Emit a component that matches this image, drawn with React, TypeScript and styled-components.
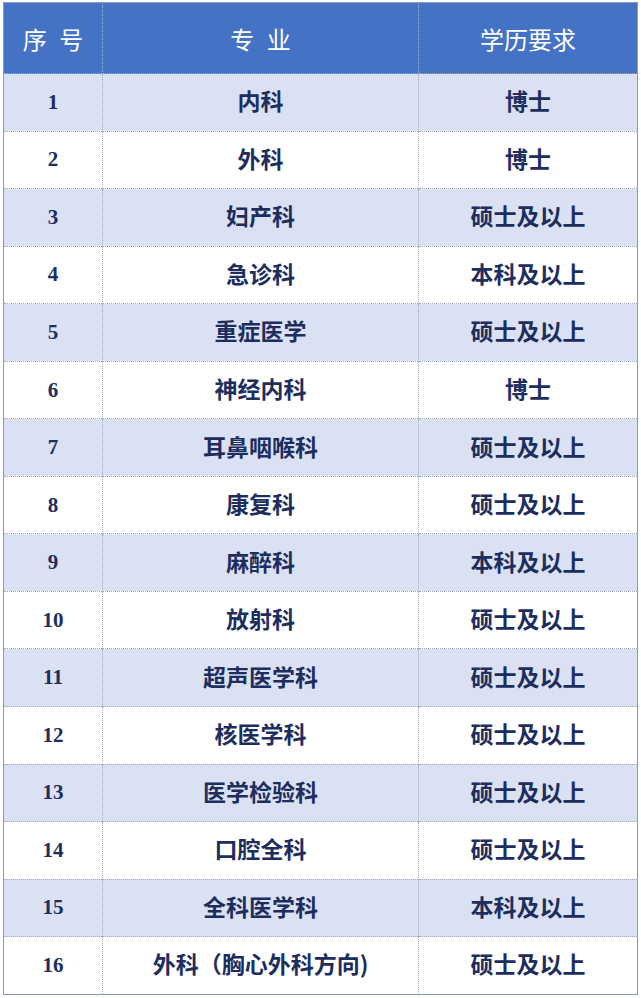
import React from 'react';
import styled, { createGlobalStyle } from 'styled-components';

const GlobalStyle = createGlobalStyle`
  html, body {
    margin: 0;
    padding: 0;
    background: #ffffff;
  }
`;

const Page = styled.div`
  width: 641px;
  height: 998px;
  padding: 2px 0 0 3px;
  box-sizing: border-box;
  background: #ffffff;
`;

const Table = styled.table`
  width: 634px;
  border-collapse: collapse;
  table-layout: fixed;
  border: 1.5px solid #8a9bb8;
  font-family: "Noto Sans CJK SC", "Noto Sans", sans-serif;
`;

const HeadCell = styled.th`
  height: 70px;
  padding: 0;
  background: #4472c4;
  color: #ffffff;
  font-size: 24px;
  font-weight: 400;
  word-spacing: 7px;
  text-align: center;
  vertical-align: middle;
  border-right: 1px dotted #9fb4dc;
  &:last-child {
    border-right: none;
  }
`;

const Row = styled.tr<{ $striped: boolean }>`
  height: 57.56px;
  background: ${(p) => (p.$striped ? '#d9e1f2' : '#ffffff')};
  border-top: 1px dotted #a2a9b6;
`;

const Cell = styled.td<{ $num?: boolean }>`
  padding: 0 0 ${(p) => (p.$num ? '0' : '4px')};
  text-align: center;
  vertical-align: middle;
  color: #1c2d5e;
  font-weight: 700;
  font-size: ${(p) => (p.$num ? '21px' : '23px')};
  font-family: ${(p) =>
    p.$num
      ? '"Liberation Serif", "DejaVu Serif", serif'
      : '"Noto Sans CJK SC", "Noto Sans", sans-serif'};
  border-right: 1px dotted #a2a9b6;
  &:last-child {
    border-right: none;
  }
`;

const rows: [string, string][] = [
  ['内科', '博士'],
  ['外科', '博士'],
  ['妇产科', '硕士及以上'],
  ['急诊科', '本科及以上'],
  ['重症医学', '硕士及以上'],
  ['神经内科', '博士'],
  ['耳鼻咽喉科', '硕士及以上'],
  ['康复科', '硕士及以上'],
  ['麻醉科', '本科及以上'],
  ['放射科', '硕士及以上'],
  ['超声医学科', '硕士及以上'],
  ['核医学科', '硕士及以上'],
  ['医学检验科', '硕士及以上'],
  ['口腔全科', '硕士及以上'],
  ['全科医学科', '本科及以上'],
  ['外科（胸心外科方向)', '硕士及以上'],
];

const App: React.FC = () => {
  return (
    <Page>
      <GlobalStyle />
      <Table>
        <colgroup>
          <col style={{ width: 99 }} />
          <col style={{ width: 316 }} />
          <col style={{ width: 219 }} />
        </colgroup>
        <thead>
          <tr>
            <HeadCell>序 号</HeadCell>
            <HeadCell>专 业</HeadCell>
            <HeadCell>学历要求</HeadCell>
          </tr>
        </thead>
        <tbody>
          {rows.map(([major, degree], i) => (
            <Row key={i} $striped={i % 2 === 0}>
              <Cell $num>{i + 1}</Cell>
              <Cell>{major}</Cell>
              <Cell>{degree}</Cell>
            </Row>
          ))}
        </tbody>
      </Table>
    </Page>
  );
};

export default App;
